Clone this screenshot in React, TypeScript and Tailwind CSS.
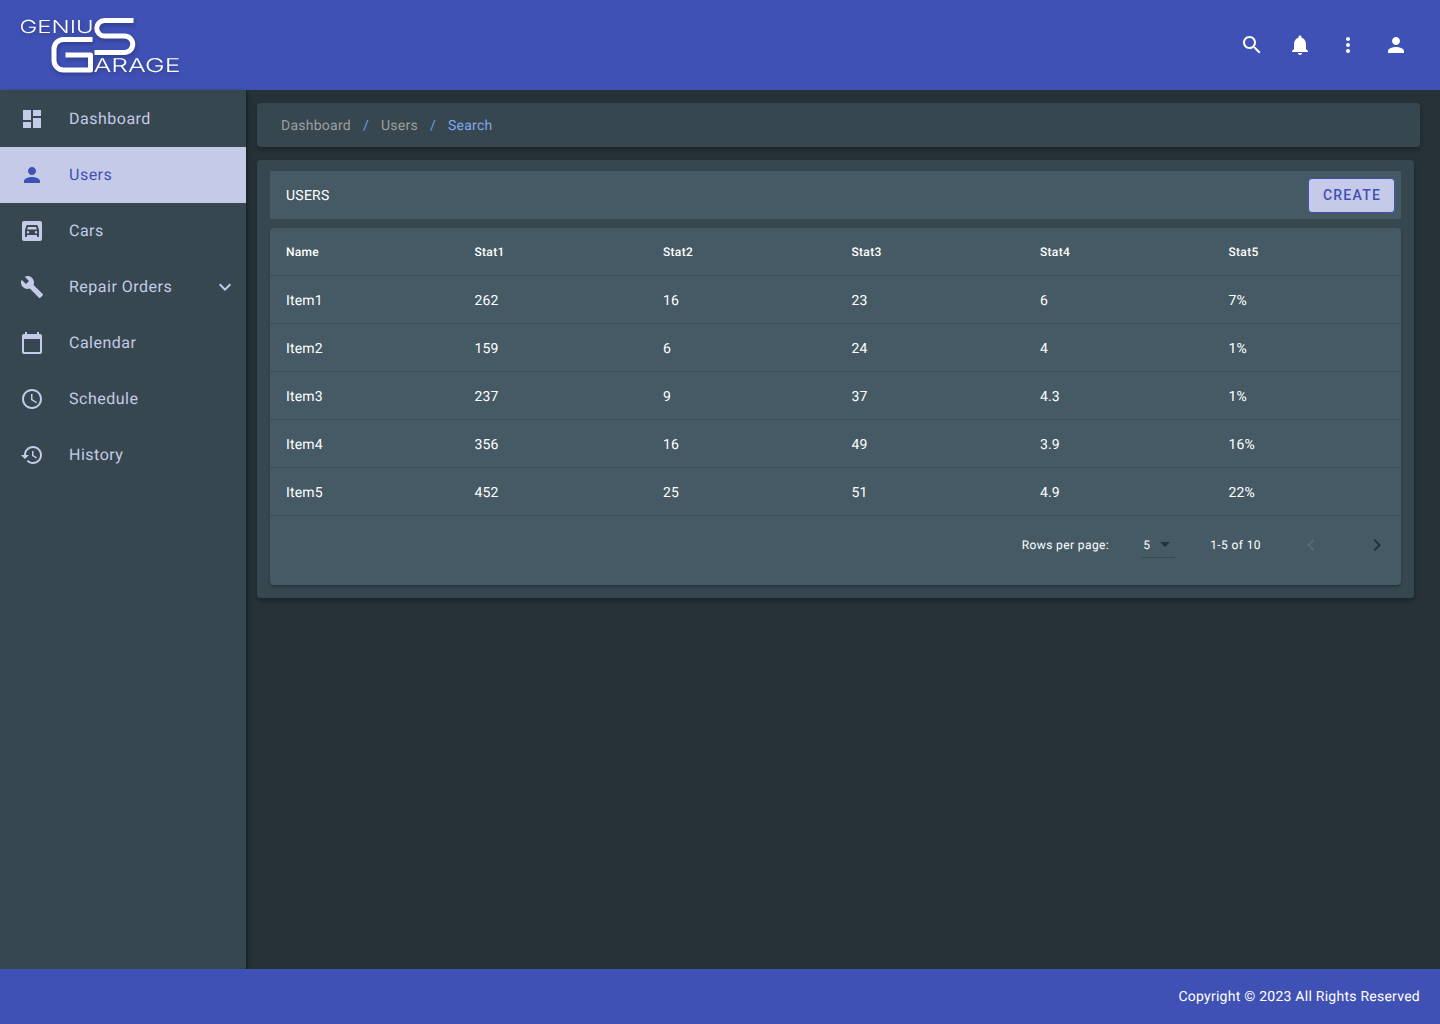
import React from "react";

const Icon = ({ d, className = "w-6 h-6" }: { d: string; className?: string }) => (
  <svg viewBox="0 0 24 24" fill="currentColor" className={className}>
    <path d={d} />
  </svg>
);

const icons = {
  dashboard: "M3 13h8V3H3v10zm0 8h8v-6H3v6zm10 0h8V11h-8v10zm0-18v6h8V3h-8z",
  person:
    "M12 12c2.21 0 4-1.79 4-4s-1.79-4-4-4-4 1.79-4 4 1.79 4 4 4zm0 2c-2.67 0-8 1.34-8 4v2h16v-2c0-2.66-5.33-4-8-4z",
  build:
    "M22.7 19l-9.1-9.1c.9-2.3.4-5-1.5-6.9-2-2-5-2.4-7.4-1.3L9 6 6 9 1.6 4.7C.4 7.1.9 10.1 2.9 12.1c1.9 1.9 4.6 2.4 6.9 1.5l9.1 9.1c.4.4 1 .4 1.4 0l2.3-2.3c.5-.4.5-1.1.1-1.4z",
  calendar:
    "M20 3h-1V1h-2v2H7V1H5v2H4c-1.1 0-2 .9-2 2v16c0 1.1.9 2 2 2h16c1.1 0 2-.9 2-2V5c0-1.1-.9-2-2-2zm0 18H4V8h16v13z",
  schedule:
    "M11.99 2C6.47 2 2 6.48 2 12s4.47 10 9.99 10C17.52 22 22 17.52 22 12S17.52 2 11.99 2zM12 20c-4.42 0-8-3.58-8-8s3.58-8 8-8 8 3.58 8 8-3.58 8-8 8zm.5-13H11v6l5.25 3.15.75-1.23-4.5-2.67z",
  history:
    "M13 3c-4.97 0-9 4.03-9 9H1l3.89 3.89.07.14L9 12H6c0-3.87 3.13-7 7-7s7 3.13 7 7-3.13 7-7 7c-1.93 0-3.68-.79-4.94-2.06l-1.42 1.42C8.27 19.99 10.51 21 13 21c4.97 0 9-4.03 9-9s-4.03-9-9-9zm-1 5v5l4.28 2.54.72-1.21-3.5-2.08V8H12z",
  search:
    "M15.5 14h-.79l-.28-.27C15.41 12.59 16 11.11 16 9.5 16 5.91 13.09 3 9.5 3S3 5.91 3 9.5 5.91 16 9.5 16c1.61 0 3.09-.59 4.23-1.57l.27.28v.79l5 4.99L20.49 19l-4.99-5zm-6 0C7.01 14 5 11.99 5 9.5S7.01 5 9.5 5 14 7.01 14 9.5 11.99 14 9.5 14z",
  bell:
    "M12 22c1.1 0 2-.9 2-2h-4c0 1.1.89 2 2 2zm6-6v-5c0-3.07-1.64-5.64-4.5-6.32V4c0-.83-.67-1.5-1.5-1.5s-1.5.67-1.5 1.5v.68C7.63 5.36 6 7.92 6 11v5l-2 2v1h16v-1l-2-2z",
  more:
    "M12 8c1.1 0 2-.9 2-2s-.9-2-2-2-2 .9-2 2 .9 2 2 2zm0 2c-1.1 0-2 .9-2 2s.9 2 2 2 2-.9 2-2-.9-2-2-2zm0 6c-1.1 0-2 .9-2 2s.9 2 2 2 2-.9 2-2-.9-2-2-2z",
  expand: "M16.59 8.59 12 13.17 7.41 8.59 6 10l6 6 6-6z",
  left: "M15.41 7.41 14 6l-6 6 6 6 1.41-1.41L10.83 12z",
  right: "M10 6 8.59 7.41 13.17 12l-4.58 4.59L10 18l6-6z",
  drop: "M7 10l5 5 5-5z",
};

// car cut out of a rounded square
const CarIcon = () => (
  <svg viewBox="0 0 24 24" fill="currentColor" className="w-6 h-6">
    <path
      fillRule="evenodd"
      d="M4 2h16a2 2 0 0 1 2 2v16a2 2 0 0 1-2 2H4a2 2 0 0 1-2-2V4a2 2 0 0 1 2-2zM7.500 6c-.6 0-1.100.4-1.300.9L5 11v6.500c0 .3.2.5.5.5h1c.3 0 .5-.2.5-.5V16h10v1.500c0 .3.2.5.5.5h1c.3 0 .5-.2.5-.5V11l-1.200-4.100c-.2-.5-.7-.9-1.300-.9h-9zM7 10.500l1-2.500h8l1 2.500H7zM8 12a1.200 1.200 0 1 1 0 2.400A1.200 1.200 0 0 1 8 12zm8 0a1.200 1.200 0 1 1 0 2.400 1.200 1.200 0 0 1 0-2.400z"
    />
  </svg>
);

const Logo = () => (
  <svg viewBox="0 0 180 90" className="w-[181px] h-[90px] drop-shadow-[1px_2px_2px_rgba(0,0,0,0.25)]" fill="none">
    <g stroke="#fff" strokeWidth="5" strokeLinejoin="round">
      {/* big S */}
      <path d="M133 20.500H104a7.750 7.750 0 0 0 0 15.500h20a8.250 8.250 0 0 1 0 16.500H94" />
      {/* big G */}
      <path d="M92 39.500H63a9.500 9.500 0 0 0-9.500 9.500v11.500a9.500 9.500 0 0 0 9.500 9.500h27V55H65" />
    </g>
    <text x="19" y="32.500" fill="#fff" fontFamily="Inter, sans-serif" fontWeight="300" fontSize="18" textLength="74" lengthAdjust="spacingAndGlyphs">
      GENIU
    </text>
    <text x="93" y="72" fill="#fff" fontFamily="Inter, sans-serif" fontWeight="300" fontSize="19" textLength="87" lengthAdjust="spacingAndGlyphs">
      ARAGE
    </text>
  </svg>
);

const navItems = [
  { name: "Dashboard", icon: icons.dashboard },
  { name: "Users", icon: icons.person, active: true },
  { name: "Cars", car: true },
  { name: "Repair Orders", icon: icons.build, arrow: true },
  { name: "Calendar", icon: icons.calendar },
  { name: "Schedule", icon: icons.schedule },
  { name: "History", icon: icons.history },
];

const rows = [
  ["Item1", "262", "16", "23", "6", "7%"],
  ["Item2", "159", "6", "24", "4", "1%"],
  ["Item3", "237", "9", "37", "4.3", "1%"],
  ["Item4", "356", "16", "49", "3.9", "16%"],
  ["Item5", "452", "25", "51", "4.9", "22%"],
];

const headers = ["Name", "Stat1", "Stat2", "Stat3", "Stat4", "Stat5"];

export default function App() {
  return (
    <div className="h-[1024px] flex flex-col bg-[#263238] overflow-hidden font-['Roboto',sans-serif] [text-rendering:geometricPrecision]">
      {/* Header */}
      <header className="h-[90px] shrink-0 bg-[#3f51b5] flex items-center justify-between text-white">
        <Logo />
        <div className="flex items-center gap-6 pr-[32px]">
          <Icon d={icons.search} />
          <Icon d={icons.bell} />
          <Icon d={icons.more} />
          <Icon d={icons.person} />
        </div>
      </header>

      <div className="flex flex-1 min-h-0">
        {/* Sidebar */}
        <aside className="w-[246px] shrink-0 pt-px bg-[#37474f] shadow-[1px_2px_4px_rgba(0,0,0,0.5)]">
          {navItems.map((item) => (
            <div
              key={item.name}
              className={
                item.active
                  ? "h-[56px] flex items-center pl-5 pr-[9px] bg-[#c5cae9] text-[#3f51b5]"
                  : "h-[56px] flex items-center pl-5 pr-[9px] text-[#c5cae9]"
              }
            >
              {item.car ? <CarIcon /> : <Icon d={item.icon as string} />}
              <span className="ml-[25px] flex-1 text-base tracking-[0.5px]">{item.name}</span>
              {item.arrow && <Icon d={icons.expand} />}
            </div>
          ))}
        </aside>

        {/* Main */}
        <main className="flex-1 min-w-0 pl-[11px] pt-[13px] pr-[20px]">
          <div className="h-[44px] pt-[2px] bg-[#37474f] rounded shadow-[0_3px_5px_rgba(0,0,0,0.25)] flex items-center pl-6 text-sm tracking-[0.25px]">
            <span className="text-[#9e9e9e]">Dashboard</span>
            <span className="mx-3 text-[#6d9eeb]">/</span>
            <span className="text-[#9e9e9e]">Users</span>
            <span className="mx-3 text-[#6d9eeb]">/</span>
            <span className="text-[#7fa8ee]">Search</span>
          </div>

          <div className="mt-[13px] mr-[6px] h-[438px] bg-[#37474f] rounded shadow-[0_3px_5px_rgba(0,0,0,0.25)] px-[13px] pt-[11px]">
            <div className="h-[48px] bg-[#455a64] flex items-center justify-between pl-4 pr-[6px]">
              <span className="pt-[2px] text-sm text-white tracking-[0.25px]">USERS</span>
              <button className="h-[35px] w-[87px] pl-px rounded bg-[#c5cae9] border border-[#3f51b5] text-[#3f51b5] text-sm font-medium tracking-[1.25px]">
                CREATE
              </button>
            </div>

            <div className="mt-[9px] h-[357px] bg-[#455a64] rounded shadow-[0_2px_3px_rgba(0,0,0,0.25)] flex flex-col">
              <div className="grid grid-cols-6 h-[48px] items-center border-b border-[#3d505a] text-xs font-medium text-white tracking-[0.3px]">
                {headers.map((h) => (
                  <span key={h} className="pl-4">{h}</span>
                ))}
              </div>
              {rows.map((row) => (
                <div key={row[0]} className="grid grid-cols-6 h-[48px] items-center border-b border-[#3d505a] text-sm text-white tracking-[0.15px]">
                  {row.map((cell, i) => (
                    <span key={i} className="pl-4 pt-[2px]">{cell}</span>
                  ))}
                </div>
              ))}
              {/* Pagination */}
              <div className="flex items-center justify-end h-[58px] text-xs text-white tracking-[0.4px]">
                <span>Rows per page:</span>
                <div className="ml-[33px] w-[33px] h-[26px] border-b border-[#37474f] flex items-center pl-[1px] relative">
                  <span>5</span>
                  <Icon d={icons.drop} className="w-6 h-6 text-[#263238] absolute -right-[2px] top-0" />
                </div>
                <span className="ml-[35px]">1-5 of 10</span>
                <Icon d={icons.left} className="ml-[38px] w-6 h-6 text-[#566a74]" />
                <Icon d={icons.right} className="ml-[42px] mr-[12px] w-6 h-6 text-[#263238]" />
              </div>
            </div>
          </div>
        </main>
      </div>

      {/* Footer */}
      <footer className="h-[55px] shrink-0 bg-[#3f51b5] flex items-center justify-end pr-5 text-sm text-white tracking-[0.25px]">
        Copyright © 2023 All Rights Reserved
      </footer>
    </div>
  );
}
